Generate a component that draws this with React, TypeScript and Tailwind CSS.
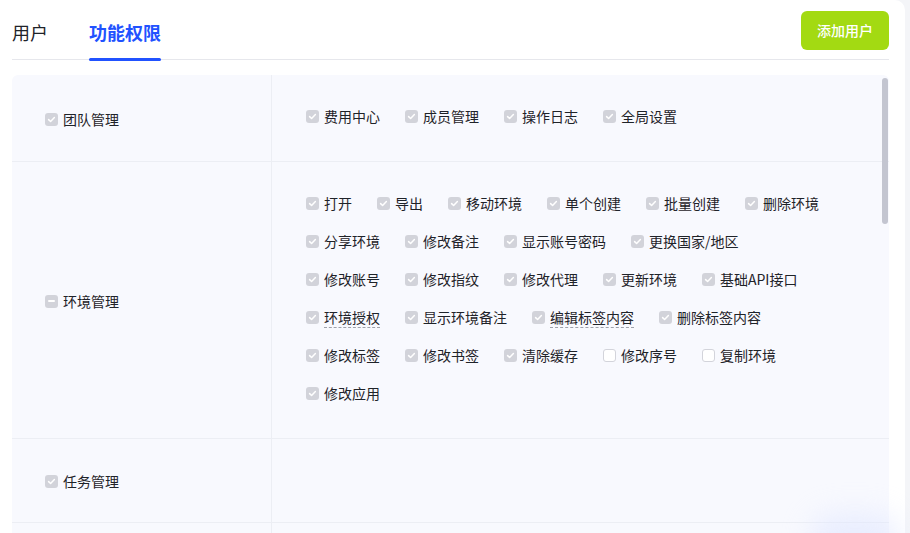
import React from "react";

type Item = { label: string; checked?: boolean; dashed?: boolean };

const Check = ({ state }: { state: "checked" | "unchecked" | "indeterminate" }) => {
  if (state === "unchecked") {
    return <span className="w-[13px] h-[13px] rounded-[3px] border border-[#d3d4db] bg-white shrink-0" />;
  }
  return (
    <span className="w-[13px] h-[13px] rounded-[3px] bg-[#d2d3da] shrink-0 flex items-center justify-center">
      {state === "checked" ? (
        <svg width="9" height="9" viewBox="0 0 9 9" fill="none">
          <path d="M1.6 4.6 L3.6 6.5 L7.4 2.5" stroke="white" strokeWidth="1.5" strokeLinecap="round" strokeLinejoin="round" />
        </svg>
      ) : (
        <span className="w-[7px] h-[2px] bg-white rounded-full" />
      )}
    </span>
  );
};

const Opt = ({ item }: { item: Item }) => (
  <div className="flex items-center gap-[5px] mr-[25px]">
    <Check state={item.checked === false ? "unchecked" : "checked"} />
    <span
      className={
        "text-[14px] leading-[20px] text-[#1f2329] whitespace-nowrap " +
        (item.dashed ? "border-b border-dashed border-[#9ea1aa]" : "")
      }
    >
      {item.label}
    </span>
  </div>
);

const lines1: Item[][] = [[{ label: "费用中心" }, { label: "成员管理" }, { label: "操作日志" }, { label: "全局设置" }]];

const lines2: Item[][] = [
  [{ label: "打开" }, { label: "导出" }, { label: "移动环境" }, { label: "单个创建" }, { label: "批量创建" }, { label: "删除环境" }],
  [{ label: "分享环境" }, { label: "修改备注" }, { label: "显示账号密码" }, { label: "更换国家/地区" }],
  [{ label: "修改账号" }, { label: "修改指纹" }, { label: "修改代理" }, { label: "更新环境" }, { label: "基础API接口" }],
  [{ label: "环境授权", dashed: true }, { label: "显示环境备注" }, { label: "编辑标签内容", dashed: true }, { label: "删除标签内容" }],
  [{ label: "修改标签" }, { label: "修改书签" }, { label: "清除缓存" }, { label: "修改序号", checked: false }, { label: "复制环境", checked: false }],
  [{ label: "修改应用" }],
];

const Row = ({
  label,
  state,
  lines,
}: {
  label: string;
  state: "checked" | "indeterminate";
  lines: Item[][];
}) => (
  <div className="flex border-b border-[#eceef4]">
    <div className="w-[260px] shrink-0 border-r border-[#eceef4] flex items-center pl-[33px] gap-[5px] pt-[2px]">
      <Check state={state} />
      <span className="text-[14px] text-[#1f2329]">{label}</span>
    </div>
    <div className="flex-1 pt-[22px] pb-[26px] pl-[34px]">
      {lines.map((l, i) => (
        <div key={i} className="flex items-center h-[38px]">
          {l.map((it) => (
            <Opt key={it.label} item={it} />
          ))}
        </div>
      ))}
    </div>
  </div>
);

export default function App() {
  return (
    <div
      className="w-[910px] h-[533px] overflow-hidden bg-[#f4f5f8] relative"
      style={{ fontFamily: '"Noto Sans CJK SC", "Noto Sans", sans-serif' }}
    >
      <div className="w-[905px] h-[533px] bg-white rounded-tr-[10px] px-[12px] pr-[16px] flex flex-col">
        <div className="flex items-end justify-between h-[60px] border-b border-[#e6e7ec] relative">
          <div className="flex items-end h-full">
            <div className="h-full flex items-center text-[18px] text-[#1f2329] pt-[6px]">用户</div>
            <div className="h-full flex items-center text-[18px] font-bold text-[#2152ff] ml-[41px] relative pt-[6px]">
              功能权限
              <span className="absolute left-0 right-0 bottom-[-2px] h-[3px] rounded-full bg-[#2152ff]" />
            </div>
          </div>
          <button className="self-start mt-[11px] w-[88px] h-[39px] rounded-[6px] bg-[#a3da12] text-white text-[14px] font-medium">
            添加用户
          </button>
        </div>
        <div className="mt-[15px] bg-[#f8f9fe] rounded-t-[6px] relative flex-1 overflow-hidden">
          <Row label="团队管理" state="checked" lines={lines1} />
          <Row label="环境管理" state="indeterminate" lines={lines2} />
          <div className="flex border-b border-[#eceef4] h-[84px]">
            <div className="w-[260px] shrink-0 border-r border-[#eceef4] flex items-center pl-[33px] gap-[5px] pt-[2px]">
              <Check state="checked" />
              <span className="text-[14px] text-[#1f2329]">任务管理</span>
            </div>
            <div className="flex-1" />
          </div>
          <div className="flex h-[60px]">
            <div className="w-[260px] shrink-0 border-r border-[#eceef4]" />
            <div className="flex-1" />
          </div>
          <div className="absolute right-[1px] top-[3px] w-[6px] h-[146px] rounded-full bg-[#c3c5d0]" />
        </div>
      </div>
      <div className="absolute right-[10px] bottom-[-30px] w-[90px] h-[50px] rounded-full bg-[#dfe6ff] opacity-60 blur-[14px]" />
    </div>
  );
}
